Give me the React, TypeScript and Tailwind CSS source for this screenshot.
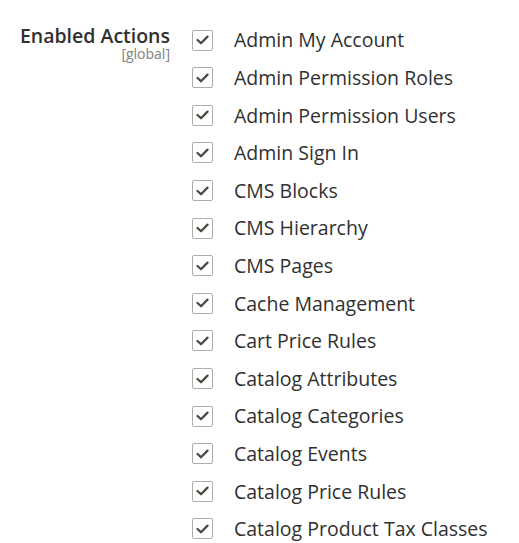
const actions = [
    'Admin My Account',
    'Admin Permission Roles',
    'Admin Permission Users',
    'Admin Sign In',
    'CMS Blocks',
    'CMS Hierarchy',
    'CMS Pages',
    'Cache Management',
    'Cart Price Rules',
    'Catalog Attributes',
    'Catalog Categories',
    'Catalog Events',
    'Catalog Price Rules',
    'Catalog Product Tax Classes',
];

function CheckBox() {
    return (
        <span className="flex h-[21px] w-[21px] shrink-0 items-center justify-center rounded-[2px] border border-[#adadad] bg-white">
            <svg width="13" height="10" viewBox="0 0 13 10" fill="none">
                <path d="M1.5 5 L5 8.2 L11.5 1.6" stroke="#514943" strokeWidth="2.3" strokeLinecap="round" strokeLinejoin="round" />
            </svg>
        </span>
    );
}

export default function App() {
    return (
        <div className="min-h-[543px] w-[519px] bg-white font-['Open_Sans',sans-serif] text-[#303030]">
            <div className="flex pt-[21.4px]">
                <div className="w-[170px] shrink-0 pt-[7px] text-right">
                    <div className="text-[19.5px] font-semibold leading-[16px]">Enabled Actions</div>
                    <div className="mt-[3px] text-[14px] leading-[14px] text-[#808080]">[global]</div>
                </div>
                <ul className="ml-[22px] flex flex-col">
                    {actions.map((label) => (
                        <li key={label} className="flex h-[37.6px] items-center gap-[21px]">
                            <CheckBox />
                            <span className="whitespace-nowrap text-[19.5px] leading-none">{label}</span>
                        </li>
                    ))}
                </ul>
            </div>
        </div>
    );
}
